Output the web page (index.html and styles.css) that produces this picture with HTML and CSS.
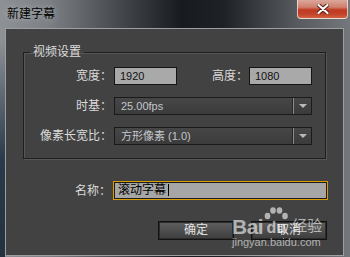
FILE: index.html
```html
<!DOCTYPE html>
<html>

<head>
    <meta charset="UTF-8">
    <title>新建字幕</title>
    <link rel="stylesheet" href="styles.css">
</head>

<body>
    <div class="window">
        <div class="titlebar">
            <span class="title">新建字幕</span>
            <div class="close">
                <svg width="12" height="10" viewBox="0 0 12 10">
                    <path d="M1.5 1 L10.5 9 M10.5 1 L1.5 9" stroke="#5a1a10" stroke-width="4" stroke-linecap="round"/>
                    <path d="M1.5 1 L10.5 9 M10.5 1 L1.5 9" stroke="#ffffff" stroke-width="2.2" stroke-linecap="round"/>
                </svg>
            </div>
        </div>

        <div class="panel">
            <fieldset class="group">
                <legend>视频设置</legend>
                <div class="row">
                    <label class="label">宽度：</label>
                    <div class="field">1920</div>
                    <label class="label label-mid">高度：</label>
                    <div class="field">1080</div>
                </div>
                <div class="row">
                    <label class="label">时基：</label>
                    <div class="select">
                        <span class="select-text">25.00fps</span>
                        <span class="select-arrow"><i class="tri"></i></span>
                    </div>
                </div>
                <div class="row">
                    <label class="label">像素长宽比：</label>
                    <div class="select">
                        <span class="select-text">方形像素 (1.0)</span>
                        <span class="select-arrow"><i class="tri"></i></span>
                    </div>
                </div>
            </fieldset>

            <div class="name-row">
                <label class="label name-label">名称：</label>
                <div class="name-input">滚动字幕<span class="caret"></span></div>
            </div>

            <div class="buttons">
                <div class="btn">确定</div>
                <div class="btn">取消</div>
            </div>
        </div>

        <!-- baidu jingyan watermark -->
        <div class="watermark">
            <div class="wm-logo">
                <span class="wm-bai">Bai</span>
                <span class="wm-paw">
                    <svg width="24" height="13" viewBox="0 0 24 13">
                        <ellipse cx="3.5" cy="9" rx="2.8" ry="3.3" fill="currentColor"/>
                        <ellipse cx="9" cy="3.5" rx="2.8" ry="3.3" fill="currentColor"/>
                        <ellipse cx="15.5" cy="3.5" rx="2.8" ry="3.3" fill="currentColor"/>
                        <ellipse cx="21" cy="9" rx="2.8" ry="3.3" fill="currentColor"/>
                    </svg>
                    <span class="wm-du">du</span>
                </span>
                <span class="wm-jy">经验</span>
            </div>
            <div class="wm-url">jingyan.baidu.com</div>
        </div>
    </div>
</body>

</html>
```

FILE: styles.css
```css
* {
    box-sizing: border-box;
}

body {
    margin: 0;
    width: 350px;
    height: 257px;
    overflow: hidden;
    font-family: "Liberation Sans", "Noto Sans CJK SC", sans-serif;
    font-size: 12px;
}

.window {
    position: relative;
    width: 350px;
    height: 257px;
    background:
        linear-gradient(to bottom, rgba(30, 45, 60, 0) 40px, rgba(30, 48, 66, 0.9) 160px, #22323f 100%) left top / 5px 100% no-repeat,
        linear-gradient(to right, #8e9296 0%, #7c8084 14%, #45494d 34%, #171b1f 52%, #1e2226 64%, #55595d 84%, #74787c 100%);
}

.titlebar {
    display: flex;
    height: 28px;
}

.title {
    flex: 1;
    padding: 7px 0 0 7px;
    line-height: 14px;
    color: #000;
    text-shadow: 0 0 6px rgba(255, 255, 255, 0.45);
}

.close {
    display: flex;
    align-items: center;
    justify-content: center;
    width: 51px;
    height: 19px;
    margin-right: 2px;
    border: 1px solid rgba(235, 235, 235, 0.75);
    border-top: none;
    border-radius: 0 0 4px 4px;
    background: linear-gradient(to bottom, #dba89c 0%, #cf7e6c 40%, #bf3a22 55%, #c2442a 80%, #d2623e 100%);
}

.panel {
    height: 228px;
    margin: 0 6px 0 5px;
    padding-top: 16px;
    border: 1px solid #9c9fa2;
    background: #424242;
}

.group {
    margin: 0 17px;
    padding: 8px 0 13px;
    min-width: 0;
    border: 1px solid #1e1e1e;
    box-shadow: 1px 1px 0 #575757, inset 1px 1px 0 #575757;
}

.group legend {
    margin-left: 6px;
    padding: 0 3px;
    line-height: 14px;
    color: #dcdcdc;
}

.row {
    display: flex;
    align-items: center;
    height: 18px;
    margin-bottom: 12px;
}

.row:last-child {
    margin-bottom: 0;
}

.label {
    width: 88px;
    margin-right: 2px;
    text-align: right;
    line-height: 14px;
    color: #dadada;
}

.label-mid {
    width: 36px;
    margin-left: 35px;
    margin-right: 1px;
}

.field {
    width: 63px;
    height: 18px;
    padding-left: 5px;
    border: 1px solid #151515;
    background: #a9a9a9;
    color: #111;
    font-size: 11px;
    line-height: 16px;
}

.select {
    display: flex;
    width: 198px;
    height: 18px;
    border: 1px solid #1a1a1a;
    background: linear-gradient(to bottom, #474747, #3b3b3b);
    color: #c3c7cc;
    font-size: 11px;
    line-height: 16px;
}

.select-text {
    flex: 1;
    padding-left: 6px;
}

.select-arrow {
    display: flex;
    align-items: center;
    justify-content: center;
    width: 18px;
    border-left: 1px solid #8c8c8c;
    box-shadow: -1px 0 0 #262626;
}

.tri {
    width: 0;
    height: 0;
    border-top: 4px solid #b9b9b9;
    border-left: 4px solid transparent;
    border-right: 4px solid transparent;
}

.name-row {
    display: flex;
    align-items: center;
    margin-top: 22px;
}

.name-label {
    width: 105px;
}

.name-input {
    width: 215px;
    height: 19px;
    padding-left: 4px;
    border: 1px solid #dc9d00;
    box-shadow: inset 0 0 0 1px #1c1c1c;
    background: #a6a6a6;
    color: #000;
    line-height: 17px;
}

.caret {
    display: inline-block;
    width: 1px;
    height: 12px;
    margin-left: 2px;
    vertical-align: -2px;
    background: #000;
}

.buttons {
    display: flex;
    justify-content: flex-end;
    gap: 17px;
    margin-top: 21px;
    padding-right: 16px;
}

.btn {
    width: 76px;
    height: 19px;
    border: 1px solid #121212;
    box-shadow: inset 0 0 0 1px #2c2c2c;
    background: linear-gradient(to bottom, #5f5f5f, #3d3d3d);
    color: #e2e2e2;
    text-align: center;
    line-height: 17px;
}

.watermark {
    position: absolute;
    left: 232px;
    top: 204px;
    color: rgba(255, 255, 255, 0.6);
}

.wm-logo {
    display: flex;
    align-items: flex-end;
    height: 32px;
}

.wm-bai {
    font-weight: bold;
    font-size: 21px;
    line-height: 19px;
    letter-spacing: -0.5px;
}

.wm-paw {
    display: flex;
    flex-direction: column;
    align-items: center;
    margin-left: 1px;
}

.wm-du {
    font-weight: bold;
    font-size: 16px;
    line-height: 16px;
}

.wm-jy {
    margin-left: 4px;
    margin-bottom: 1px;
    font-size: 15px;
    line-height: 18px;
}

.wm-url {
    font-size: 11px;
    line-height: 12px;
}
```
